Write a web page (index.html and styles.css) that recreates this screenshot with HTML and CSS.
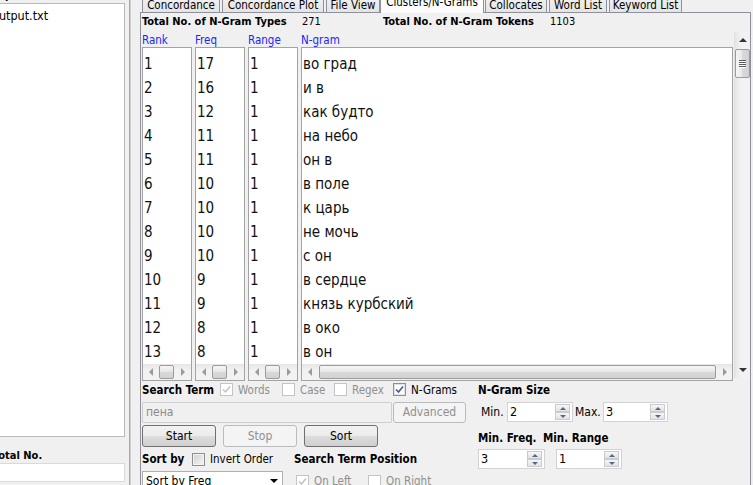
FILE: index.html
```html
<!DOCTYPE html>
<html>
<head>
<meta charset="utf-8">
<link rel="stylesheet" href="styles.css">
</head>
<body>
<div class="app">
  <aside class="side">
    <div class="side-title">Corpus Files</div>
    <div class="file-list"><div class="file">output.txt</div></div>
    <div class="side-total">Total No.</div>
    <div class="side-box"></div>
  </aside>
  <div class="splitter"><div class="splitter-line"></div></div>
  <main class="main">
    <nav class="tabs">
      <div class="tab t1">Concordance</div>
      <div class="tab t2">Concordance Plot</div>
      <div class="tab t3">File View</div>
      <div class="tab t4 active">Clusters/N-Grams</div>
      <div class="tab t5">Collocates</div>
      <div class="tab t6">Word List</div>
      <div class="tab t7">Keyword List</div>
    </nav>
    <section class="panel">
      <div class="totals">
        <span class="tot-l1 b">Total No. of N-Gram Types</span><span class="tot-v1">271</span>
        <span class="tot-l2 b">Total No. of N-Gram Tokens</span><span>1103</span>
      </div>
      <div class="results">
        <div class="col small">
          <div class="col-head">Rank</div>
          <div class="listbox">
            <div class="rows">
              <div class="row">1</div><div class="row">2</div><div class="row">3</div><div class="row">4</div><div class="row">5</div><div class="row">6</div><div class="row">7</div><div class="row">8</div><div class="row">9</div><div class="row">10</div><div class="row">11</div><div class="row">12</div><div class="row">13</div>
            </div>
            <div class="hscroll"><div class="hbtn"><span class="tri-l"></span></div><div class="hthumb"></div><div class="hbtn"><span class="tri-r"></span></div></div>
          </div>
        </div>
        <div class="col small">
          <div class="col-head">Freq</div>
          <div class="listbox">
            <div class="rows">
              <div class="row">17</div><div class="row">16</div><div class="row">12</div><div class="row">11</div><div class="row">11</div><div class="row">10</div><div class="row">10</div><div class="row">10</div><div class="row">10</div><div class="row">9</div><div class="row">9</div><div class="row">8</div><div class="row">8</div>
            </div>
            <div class="hscroll"><div class="hbtn"><span class="tri-l"></span></div><div class="hthumb"></div><div class="hbtn"><span class="tri-r"></span></div></div>
          </div>
        </div>
        <div class="col small">
          <div class="col-head">Range</div>
          <div class="listbox">
            <div class="rows">
              <div class="row">1</div><div class="row">1</div><div class="row">1</div><div class="row">1</div><div class="row">1</div><div class="row">1</div><div class="row">1</div><div class="row">1</div><div class="row">1</div><div class="row">1</div><div class="row">1</div><div class="row">1</div><div class="row">1</div>
            </div>
            <div class="hscroll"><div class="hbtn"><span class="tri-l"></span></div><div class="hthumb"></div><div class="hbtn"><span class="tri-r"></span></div></div>
          </div>
        </div>
        <div class="col wide">
          <div class="col-head">N-gram</div>
          <div class="listbox">
            <div class="rows">
              <div class="row">во град</div><div class="row">и в</div><div class="row">как будто</div><div class="row">на небо</div><div class="row">он в</div><div class="row">в поле</div><div class="row">к царь</div><div class="row">не мочь</div><div class="row">с он</div><div class="row">в сердце</div><div class="row">князь курбский</div><div class="row">в око</div><div class="row">в он</div>
            </div>
            <div class="hscroll"><div class="hbtn"><span class="tri-l"></span></div><div class="hthumb long"></div><div class="hbtn"><span class="tri-r"></span></div></div>
          </div>
        </div>
        <div class="vscroll">
          <div class="vbtn"><span class="tri-u"></span></div>
          <div class="vthumb"><span class="grip"></span><span class="grip"></span><span class="grip"></span><span class="grip"></span></div>
          <div class="vtrack"></div>
          <div class="vbtn"><span class="tri-d"></span></div>
        </div>
      </div>
      <div class="controls">
        <div class="ctl-left">
          <div class="crow r1">
            <span class="b st-label">Search Term</span>
            <label class="chk w-words dis"><span class="cb checked"><svg viewBox="0 0 11 11"><path d="M2 5.5 L4.5 8 L9 2.5"/></svg></span>Words</label>
            <label class="chk w-case dis"><span class="cb"></span>Case</label>
            <label class="chk w-regex dis"><span class="cb"></span>Regex</label>
            <label class="chk"><span class="cb checked on"><svg viewBox="0 0 11 11"><path d="M2 5.5 L4.5 8 L9 2.5"/></svg></span>N-Grams</label>
          </div>
          <div class="crow r2">
            <div class="field">пена</div>
            <div class="btn disabled adv">Advanced</div>
          </div>
          <div class="crow r3">
            <div class="btn">Start</div>
            <div class="btn disabled">Stop</div>
            <div class="btn">Sort</div>
          </div>
          <div class="crow r45">
            <div class="grp-a">
              <div class="sub-head"><span class="b sb-label">Sort by</span><label class="chk"><span class="cb on"></span>Invert Order</label></div>
              <div class="combo"><span>Sort by Freq</span><span class="tri-d dark"></span></div>
            </div>
            <div class="grp-b">
              <div class="sub-head"><span class="b">Search Term Position</span></div>
              <div class="pos-row">
                <label class="chk w-left dis"><span class="cb checked"><svg viewBox="0 0 11 11"><path d="M2 5.5 L4.5 8 L9 2.5"/></svg></span>On Left</label>
                <label class="chk dis"><span class="cb"></span>On Right</label>
              </div>
            </div>
          </div>
        </div>
        <div class="ctl-right">
          <div class="rrow rh b">N-Gram Size</div>
          <div class="rrow rs">
            <span class="lbl-min">Min.</span>
            <div class="spin s-min"><span class="sv">2</span><span class="sbtns"><span class="sb"><span class="tri-su"></span></span><span class="sb"><span class="tri-sd"></span></span></span></div>
            <span class="lbl-max">Max.</span>
            <div class="spin s-max"><span class="sv">3</span><span class="sbtns"><span class="sb"><span class="tri-su"></span></span><span class="sb"><span class="tri-sd"></span></span></span></div>
          </div>
          <div class="rrow rh2 b"><span class="lbl-mf">Min. Freq.</span><span>Min. Range</span></div>
          <div class="rrow rs2">
            <div class="spin s-mf"><span class="sv">3</span><span class="sbtns"><span class="sb"><span class="tri-su"></span></span><span class="sb"><span class="tri-sd"></span></span></span></div>
            <div class="spin s-mr"><span class="sv">1</span><span class="sbtns"><span class="sb"><span class="tri-su"></span></span><span class="sb"><span class="tri-sd"></span></span></span></div>
          </div>
        </div>
      </div>
    </section>
  </main>
</div>
</body>
</html>
```

FILE: styles.css
```css
* { box-sizing: border-box; }
html, body { margin: 0; padding: 0; }
body {
  width: 753px; height: 485px; overflow: hidden;
  background: #f0f0f0;
  font-family: "DejaVu Sans Condensed", "DejaVu Sans", sans-serif;
  font-stretch: condensed;
  font-size: 11px; color: #000;
}
.b { font-weight: bold; }
.app { display: flex; height: 485px; }

/* left side */
.side { width: 125px; flex: none; display: flex; flex-direction: column; }
.side-title { height: 3px; overflow: visible; font-weight: bold; line-height: 14px; text-indent: -14px; position: relative; top: -11px; white-space: nowrap; }
.file-list { height: 434px; background: #fff; border: 1px solid #b9b9b9; border-left: 0; }
.file { font-size: 12.5px; line-height: 16px; padding-top: 4px; text-indent: -8px; white-space: nowrap; }
.side-total { height: 26px; padding-top: 12px; line-height: 14px; font-weight: bold; text-indent: -7px; white-space: nowrap; }
.side-box { height: 19px; background: #fff; border: 1px solid #dadada; border-left: 0; }
.splitter { width: 15px; flex: none; padding-left: 4px; }
.splitter-line { width: 2px; height: 100%; border-left: 1px solid #a9a9a9; border-right: 1px solid #cfcfcf; }

/* main */
.main { flex: 1; display: flex; flex-direction: column; min-width: 0; }
.tabs { height: 12px; display: flex; align-items: flex-end; padding-left: 2px; position: relative; z-index: 1; }
.tab {
  height: 19px; padding-top: 4px; line-height: 14px; text-align: center; white-space: nowrap;
  border: 1px solid #8e9199; border-bottom: 0; border-radius: 2px 2px 0 0;
  background: linear-gradient(#f4f4f4, #e4e4e4);
  margin-right: 2px; font-size: 11.5px;
}
.t1 { width: 78px; }
.t2 { width: 102px; }
.t3 { width: 54px; margin-right: 0; }
.t4 { width: 104px; margin-right: 0; }
.t5 { width: 62px; margin-left: 1px; }
.t6 { width: 58px; }
.t7 { width: 73px; }
.tab.active { height: 22px; padding-top: 4px; background: #fcfcfc; margin-bottom: -1px; line-height: 13px; }

.panel {
  flex: 1; margin-right: 2px;
  border: 1px solid #8e9199; border-bottom: 0;
  padding-left: 1px;
  display: flex; flex-direction: column;
}
.totals { height: 19px; line-height: 17px; white-space: nowrap; display: flex; }
.tot-l1 { width: 160px; }
.tot-v1 { width: 81px; }
.tot-l2 { width: 167px; }

.results { height: 346px; display: flex; }
.col { display: flex; flex-direction: column; margin-right: 3px; }
.col.small { width: 50px; }
.col.wide { flex: 1; margin-right: 1px; }
.col-head { height: 15px; line-height: 16px; color: #2323ff; font-size: 11.5px; }
.listbox { flex: 1; border: 1px solid #a3a3a3; background: #fff; display: flex; flex-direction: column; }
.rows { flex: 1; overflow: hidden; padding-top: 4px; }
.row { height: 24px; line-height: 24px; font-size: 15px; padding-left: 1px; white-space: nowrap; color: #111; }

.hscroll { height: 16px; display: flex; background: linear-gradient(#e6e6e6, #f2f2f2 40%, #f2f2f2); }
.hbtn { width: 15px; flex: none; display: flex; align-items: center; justify-content: center; }
.hthumb { width: 15px; flex: none; margin: 1px; border: 1px solid #9b9b9b; border-radius: 2px;
  background: linear-gradient(#f5f5f5, #e9e9e9 45%, #d9d9d9 50%, #d2d2d2); }
.hthumb.long { flex: 1; width: auto; margin-left: 2px; }
.tri-l { width: 0; height: 0; border-right: 4px solid #9a9a9a; border-top: 4px solid transparent; border-bottom: 4px solid transparent; }
.tri-r { width: 0; height: 0; border-left: 4px solid #9a9a9a; border-top: 4px solid transparent; border-bottom: 4px solid transparent; }

.vscroll { width: 16px; flex: none; display: flex; flex-direction: column; background: linear-gradient(90deg, #e6e6e6, #f2f2f2 40%, #f2f2f2); border-left: 1px solid #e0e0e0; }
.vbtn { height: 16px; flex: none; display: flex; align-items: center; justify-content: center; }
.vthumb { height: 29px; margin-top: 1px; border: 1px solid #9b9b9b; border-radius: 2px;
  background: linear-gradient(90deg, #f5f5f5, #e9e9e9 45%, #d9d9d9 50%, #d2d2d2);
  display: flex; flex-direction: column; align-items: center; justify-content: center; gap: 1px; }
.grip { width: 7px; height: 1px; background: #5a5a5a; box-shadow: 0 1px 0 #fff; }
.vtrack { flex: 1; }
.tri-u { width: 0; height: 0; border-bottom: 4px solid #333; border-left: 4px solid transparent; border-right: 4px solid transparent; }
.tri-d { width: 0; height: 0; border-top: 4px solid #333; border-left: 4px solid transparent; border-right: 4px solid transparent; }

/* controls */
.controls { display: flex; }
.ctl-left { width: 336px; flex: none; }
.crow { display: flex; align-items: center; }
.r1 { height: 23px; white-space: nowrap; }
.st-label { width: 78px; flex: none; font-size: 11.5px; }
.chk { display: flex; align-items: center; white-space: nowrap; font-size: 11.5px; }
.chk.dis { color: #8f8f8f; }
.w-words { width: 62px; }
.w-case { width: 52px; }
.w-regex { width: 59px; }
.w-left { width: 72px; }
.cb { width: 13px; height: 13px; flex: none; margin-right: 5px; border: 1px solid #c4c4c4; background: #fff; display: inline-flex; align-items: center; justify-content: center; }
.cb svg { width: 11px; height: 11px; fill: none; stroke: #c2c2c2; stroke-width: 1.5; }
.cb.on { border-color: #8f8f8f; background: linear-gradient(135deg, #d0d0d0, #f6f6f6); box-shadow: inset 0 0 0 1px #f4f4f4; }
.cb.checked.on { background: #fff; box-shadow: inset 0 0 0 1px #e2e2e2; }
.cb.on svg { stroke: #4b5d8c; stroke-width: 1.7; }

.r2 { margin-top: 1px; height: 21px; }
.field { width: 250px; height: 21px; border: 1px solid #cfcfcf; background: #f0f0f0; color: #8a8a8a; font-size: 12px; line-height: 19px; padding-left: 3px; border-radius: 1px; }
.btn { width: 74px; height: 22px; border: 1px solid #707070; border-radius: 3px; text-align: center; line-height: 20px; font-size: 12px;
  background: linear-gradient(#f2f2f2, #ebebeb 50%, #dddddd 50%, #cfcfcf); margin-right: 7px; }
.btn.disabled { border-color: #b9bcbe; background: #f4f4f4; color: #8f8f8f; }
.adv { width: 73px; height: 21px; line-height: 19px; margin-left: 1px; border-color: #d0d0d0; }
.r3 { margin-top: 2px; }

.r45 { align-items: flex-start; }
.grp-a { width: 152px; flex: none; }
.grp-b { flex: 1; }
.sub-head { height: 24px; display: flex; align-items: center; font-size: 11.5px; white-space: nowrap; }
.sb-label { width: 50px; }
.combo { width: 141px; height: 20px; background: #fff; border: 1px solid #b0b0b0; display: flex; align-items: center; justify-content: space-between; padding: 0 4px 0 3px; font-size: 12px; }
.tri-d.dark { border-top-color: #000; }
.pos-row { display: flex; height: 20px; align-items: center; padding-left: 2px; }

.ctl-right { width: 200px; }
.rrow { display: flex; align-items: center; white-space: nowrap; }
.rh { height: 23px; font-size: 11.5px; }
.rs { height: 20px; margin-top: 1px; }
.lbl-min { margin-left: 3px; width: 26px; font-size: 12px; }
.lbl-max { width: 28px; margin-left: 2px; font-size: 12px; }
.rh2 { height: 27px; padding-top: 5px; font-size: 11.5px; }
.lbl-mf { width: 65px; }
.rs2 { height: 20px; }
.spin { height: 20px; border: 1px solid #d2d2d2; background: #fff; display: flex; justify-content: space-between; align-items: stretch; }
.s-min { width: 66px; }
.s-max { width: 65px; }
.s-mf { width: 67px; margin-right: 11px; }
.s-mr { width: 66px; }
.sv { font-size: 12.5px; line-height: 18px; padding-left: 2px; }
.sbtns { width: 15px; display: flex; flex-direction: column; margin: 1px 2px 1px 0; }
.sb { flex: 1; border: 1px solid #c9cbd0; background: linear-gradient(#f6f6f6, #e2e2e2); display: flex; align-items: center; justify-content: center; }
.tri-su { width: 0; height: 0; border-bottom: 3px solid #55678f; border-left: 3px solid transparent; border-right: 3px solid transparent; }
.tri-sd { width: 0; height: 0; border-top: 3px solid #55678f; border-left: 3px solid transparent; border-right: 3px solid transparent; }
```
